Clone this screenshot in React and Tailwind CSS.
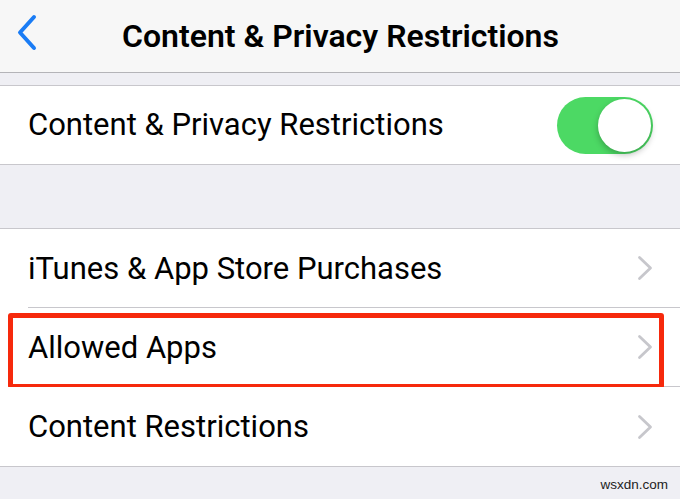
import React from 'react';

function Chevron() {
    return (
        <svg width="16" height="26" viewBox="0 0 16 26" fill="none" className="shrink-0">
            <path d="M2.5 2.5l11 10.5-11 10.5" stroke="#c7c7cc" strokeWidth="2.8" strokeLinecap="round" strokeLinejoin="round" />
        </svg>
    );
}

function Row({ label, last, highlight }) {
    return (
        <div className="relative flex h-[79px] items-center bg-white pl-[28px]">
            <div className={`flex h-full flex-1 items-center pr-[27px] ${last ? '' : 'border-b border-[#c8c7cc]'}`}>
                <span className="flex-1 pt-[2px] text-[31px] text-black">{label}</span>
                <Chevron />
            </div>
            {highlight && (
                <div className="pointer-events-none absolute left-[8px] top-[5px] h-[76px] w-[656px] rounded-[3px] border-[5px] border-[#f6290c]" />
            )}
        </div>
    );
}

export default function App() {
    return (
        <div className="h-[499px] w-[680px] overflow-hidden bg-[#efeff4]" style={{ fontFamily: 'Roboto, "Liberation Sans", sans-serif' }}>
            {/* nav bar */}
            <div className="relative flex h-[73px] items-center justify-center border-b border-[#b4b4b8] bg-[#f7f7f7]">
                <svg width="24" height="40" viewBox="0 0 24 40" fill="none" className="absolute left-[15px] top-[13px]">
                    <path d="M19 4L5 19.5L19 35" stroke="#1a7cf5" strokeWidth="4" strokeLinecap="round" strokeLinejoin="round" />
                </svg>
                <h1 className="pl-[1px] text-[32px] font-semibold text-black">Content &amp; Privacy Restrictions</h1>
            </div>

            <div className="h-[12px]" />

            <div className="border-y border-[#c8c7cc] bg-white">
                <div className="flex h-[78px] items-center pl-[28px] pr-[27px]">
                    <span className="flex-1 text-[31px] text-black">Content &amp; Privacy Restrictions</span>
                    <div className="flex h-[57px] w-[96px] items-center justify-end rounded-full bg-[#4cd964] p-[2px]">
                        <div className="h-[53px] w-[53px] rounded-full bg-white shadow-[0_3px_6px_rgba(0,0,0,0.25)]" />
                    </div>
                </div>
            </div>

            <div className="h-[63px]" />

            <div className="border-y border-[#c8c7cc]">
                <Row label="iTunes & App Store Purchases" />
                <Row label="Allowed Apps" highlight />
                <Row label="Content Restrictions" last />
            </div>

            <div className="flex justify-end pr-[12px] pt-[8px]">
                <span className="text-[13.5px] leading-[20px] text-[#222]" style={{ fontFamily: '"Liberation Sans", sans-serif' }}>wsxdn.com</span>
            </div>
        </div>
    );
}
